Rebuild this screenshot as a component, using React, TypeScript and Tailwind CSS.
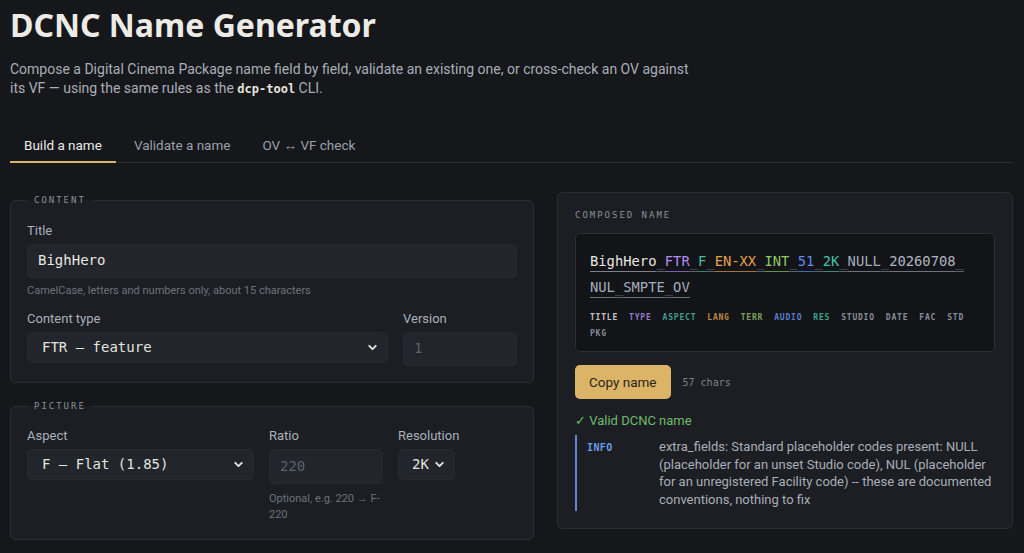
import { ChevronDown } from 'lucide-react'
import { clsx } from 'clsx'

const sans = { fontFamily: 'Roboto, "Noto Sans", sans-serif' }
const mono = '[font-family:"DejaVu_Sans_Mono",monospace]'

const segments = [
  { text: 'BighHero', color: 'text-[#e9e7e1] decoration-[#7d818a]' },
  { text: 'FTR', color: 'text-[#b48cf2] decoration-[#7a5fb0]' },
  { text: 'F', color: 'text-[#4db6a4] decoration-[#3a8276]' },
  { text: 'EN-XX', color: 'text-[#e3a24f] decoration-[#a27438]' },
  { text: 'INT', color: 'text-[#8fc866] decoration-[#67904a]' },
  { text: '51', color: 'text-[#5d8ff0] decoration-[#4467ad]' },
  { text: '2K', color: 'text-[#45c2a5] decoration-[#338c77]' },
  { text: 'NULL', color: 'text-[#a4acbb] decoration-[#6c727e]' },
  { text: '20260708', color: 'text-[#b0b5bf] decoration-[#6c727e]' },
  { text: 'NUL', color: 'text-[#a4acbb] decoration-[#6c727e]' },
  { text: 'SMPTE', color: 'text-[#a4acbb] decoration-[#6c727e]' },
  { text: 'OV', color: 'text-[#a4acbb] decoration-[#6c727e]' },
]

const tags = [
  { text: 'TITLE', color: 'text-[#c4c4c4]' },
  { text: 'TYPE', color: 'text-[#957bcb]' },
  { text: 'ASPECT', color: 'text-[#449a8c]' },
  { text: 'LANG', color: 'text-[#bd8845]' },
  { text: 'TERR', color: 'text-[#7aa25c]' },
  { text: 'AUDIO', color: 'text-[#587ec9]' },
  { text: 'RES', color: 'text-[#3ca58b]' },
  { text: 'STUDIO', color: 'text-[#878d98]' },
  { text: 'DATE', color: 'text-[#878d98]' },
  { text: 'FAC', color: 'text-[#878d98]' },
  { text: 'STD', color: 'text-[#878d98]' },
  { text: 'PKG', color: 'text-[#878d98]' },
]

function Label({ children }: { children: string }) {
  return <div className="mb-[3px] text-[13px] leading-[20px] text-[#aab0bb]">{children}</div>
}

function Select({ value, className }: { value: string; className?: string }) {
  return (
    <div
      className={clsx(
        'flex h-[31px] items-center justify-between rounded-[5px] border border-[#272a31] bg-[#22252b] pr-[8px] text-[14px] text-[#e6e4de]',
        mono,
        className
      )}
    >
      <span className="whitespace-pre">{value}</span>
      <ChevronDown size={13} strokeWidth={3.5} className="text-[#e6e4de]" />
    </div>
  )
}

function TextInput({ value, placeholder, className }: { value?: string; placeholder?: string; className?: string }) {
  return (
    <div
      className={clsx(
        'flex items-center rounded-[5px] border border-[#272a31] bg-[#22252b] pl-[10px] text-[14px]',
        mono,
        value ? 'text-[#e9e7e1]' : 'text-[#5b616c]',
        className
      )}
    >
      {value ?? placeholder}
    </div>
  )
}

function Section({ legend, children }: { legend: string; children: React.ReactNode }) {
  return (
    <fieldset className="rounded-[6px] border border-[#2a2d33] bg-[#1c1e23] px-[16px] pb-[16px] pt-[13px]">
      <legend className={clsx('px-[7px] text-[9px] tracking-[0.22em] text-[#8a909b]', mono)}>{legend}</legend>
      {children}
    </fieldset>
  )
}

export default function App() {
  const tabs = ['Build a name', 'Validate a name', 'OV ↔ VF check']
  return (
    <div className="min-h-screen bg-[#16171b] pl-[10px] pr-[11px] pt-[5px]" style={sans}>
      <h1 className="text-[32px] font-bold leading-[40px] text-[#ecebe6] [font-family:'Noto_Sans',sans-serif]">
        DCNC Name Generator
      </h1>
      <p className="mt-[15px] max-w-[695px] text-[14px] leading-[19px] text-[#a9aeb8]">
        Compose a Digital Cinema Package name field by field, validate an existing one, or cross-check an OV against
        its VF — using the same rules as the{' '}
        <code className={clsx('text-[12px] leading-[12px] font-bold text-[#e6e4de]', mono)}>dcp-tool</code> CLI.
      </p>

      <div className="mt-[37px] flex gap-[4px] border-b border-[#2a2d34]">
        {tabs.map((t, i) => (
          <div
            key={t}
            className={clsx(
              '-mb-px px-[14px] pb-[6px] text-[13.5px] leading-[20px]',
              i === 0 ? 'border-b-2 border-[#d9b366] text-[#ecebe6]' : 'border-b-2 border-transparent text-[#9aa0aa]'
            )}
          >
            {t}
          </div>
        ))}
      </div>

      <div className="mt-[31px] grid grid-cols-[524px_1fr] gap-[23px]">
        <div className="flex flex-col gap-[17px]">
          <Section legend="CONTENT">
            <Label>Title</Label>
            <TextInput value="BighHero" className="h-[34px]" />
            <div className="mt-[5px] text-[11px] leading-[16px] text-[#6c727d]">
              CamelCase, letters and numbers only, about 15 characters
            </div>
            <div className="mt-[10px] flex gap-[15px]">
              <div className="flex-1">
                <Label>Content type</Label>
                <Select value="FTR — feature" className="pl-[14px]" />
              </div>
              <div className="w-[114px]">
                <Label>Version</Label>
                <TextInput placeholder="1" className="h-[34px]" />
              </div>
            </div>
          </Section>

          <Section legend="PICTURE">
            <div className="flex gap-[15px]">
              <div className="w-[227px]">
                <Label>Aspect</Label>
                <Select value="F — Flat (1.85)" className="pl-[14px]" />
              </div>
              <div className="w-[114px]">
                <Label>Ratio</Label>
                <TextInput placeholder="220" className="h-[35px]" />
                <div className="mt-[7px] text-[11px] leading-[16px] text-[#6c727d]">Optional, e.g. 220 → F-220</div>
              </div>
              <div className="w-[57px]">
                <Label>Resolution</Label>
                <Select value="2K" className="pl-[13px]" />
              </div>
            </div>
          </Section>
        </div>

        <div className="-mt-[2px] self-start rounded-[6px] border border-[#2a2d33] bg-[#1c1e23] px-[17px] pb-[17px] pt-[16px]">
          <div className={clsx('text-[9px] leading-[12px] tracking-[0.22em] text-[#8a909b]', mono)}>COMPOSED NAME</div>
          <div className="mt-[12px] rounded-[5px] border border-[#2c2f36] bg-[#131418] px-[14px] pb-[9px] pt-[14px]">
            <div className={clsx('text-[13.8px] leading-[26px]', mono)}>
              {segments.map((s, i) => (
                <span key={i}>
                  <span className={clsx('underline underline-offset-[5px]', s.color)}>{s.text}</span>
                  {i < segments.length - 1 && (
                    <>
                      <span className="text-[#5d626c] underline decoration-[#5d626c] underline-offset-[5px]">_</span>
                      <wbr />
                    </>
                  )}
                </span>
              ))}
            </div>
            <div className={clsx('mt-[10px] flex flex-wrap gap-x-[11px] text-[8px] font-bold leading-[16px] tracking-[0.1em]', mono)}>
              {tags.map((t) => (
                <span key={t.text} className={t.color}>
                  {t.text}
                </span>
              ))}
            </div>
          </div>

          <div className="mt-[13px] flex items-center gap-[12px]">
            <button className="h-[34px] rounded-[5px] bg-[#dbb468] px-[14px] text-[13.5px] text-[#2a2418]">Copy name</button>
            <span className={clsx('text-[10px] text-[#7d838e]', mono)}>57 chars</span>
          </div>

          <div className="mt-[12px] text-[13px] leading-[20px] text-[#6dbb6d]">✓ Valid DCNC name</div>

          <div className="mt-[4px] flex border-l-2 border-[#5b87d6] py-[3px] pl-[10px]">
            <div className={clsx('w-[72px] shrink-0 pt-[1px] text-[10px] font-bold leading-[17.6px] tracking-[0.04em] text-[#6b9be8]', mono)}>
              INFO
            </div>
            <div className="text-[13px] leading-[17.6px] text-[#a9aeb8]">
              extra_fields: Standard placeholder codes present: NULL (placeholder for an unset Studio code), NUL
              (placeholder for an unregistered Facility code) -- these are documented conventions, nothing to fix
            </div>
          </div>
        </div>
      </div>
    </div>
  )
}
